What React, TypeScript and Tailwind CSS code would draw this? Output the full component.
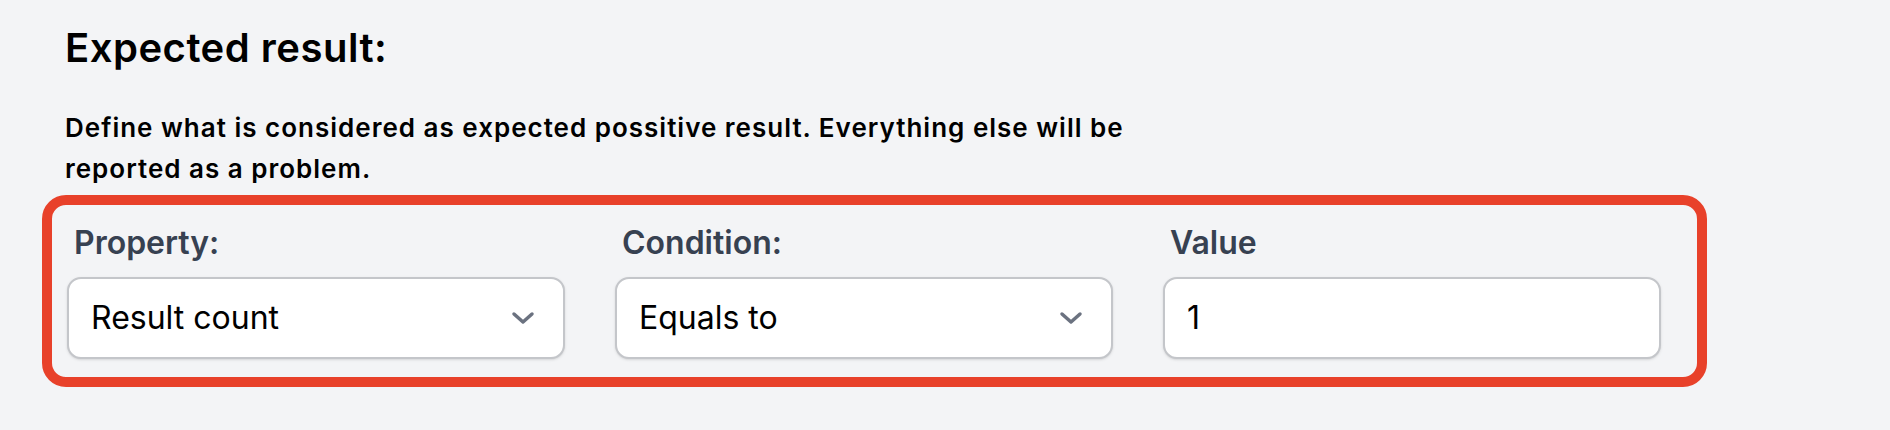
import React from 'react';

const font = { fontFamily: 'Inter, "Liberation Sans", sans-serif' };

function Chevron() {
  return (
    <svg width="24" height="14" viewBox="0 0 24 14" fill="none" className="shrink-0">
      <polyline points="3,3 12,11 21,3" stroke="#6b7280" strokeWidth="3.5" strokeLinecap="round" strokeLinejoin="round" />
    </svg>
  );
}

interface FieldProps {
  label: string;
  value: string;
  select?: boolean;
}

const Field: React.FC<FieldProps> = ({ label, value, select }) => {
  return (
    <div className="w-[498px] flex flex-col">
      <label className="pl-[7px] text-[32px] leading-[40px] font-semibold text-[#374151]">{label}</label>
      <div className="mt-[14px] h-[82px] flex items-center justify-between bg-white border-2 border-[#c4c6ca] rounded-[14px] shadow-sm pl-[22px] pr-[28px]">
        <span className="text-[32px] leading-[40px] text-black">{value}</span>
        {select && <Chevron />}
      </div>
    </div>
  );
};

export default function App() {
  return (
    <div className="min-h-screen bg-[#f3f4f6] pt-[24px]" style={font}>
      <h2 className="pl-[65px] text-[40px] leading-[48px] font-semibold tracking-[0.5px] text-black">Expected result:</h2>
      <p className="pl-[65px] mt-[35px] max-w-[1190px] text-[26px] leading-[41px] font-semibold tracking-[1px] text-black">
        Define what is considered as expected possitive result. Everything else will be reported as a problem.
      </p>
      <div className="ml-[42px] mt-[6px] w-[1665px] h-[192px] border-[10px] border-[#e8412a] rounded-[24px] pl-[15px] pt-[18px]">
        <div className="flex gap-[50px]">
          <Field label="Property:" value="Result count" select />
          <Field label="Condition:" value="Equals to" select />
          <Field label="Value" value="1" />
        </div>
      </div>
    </div>
  );
}
